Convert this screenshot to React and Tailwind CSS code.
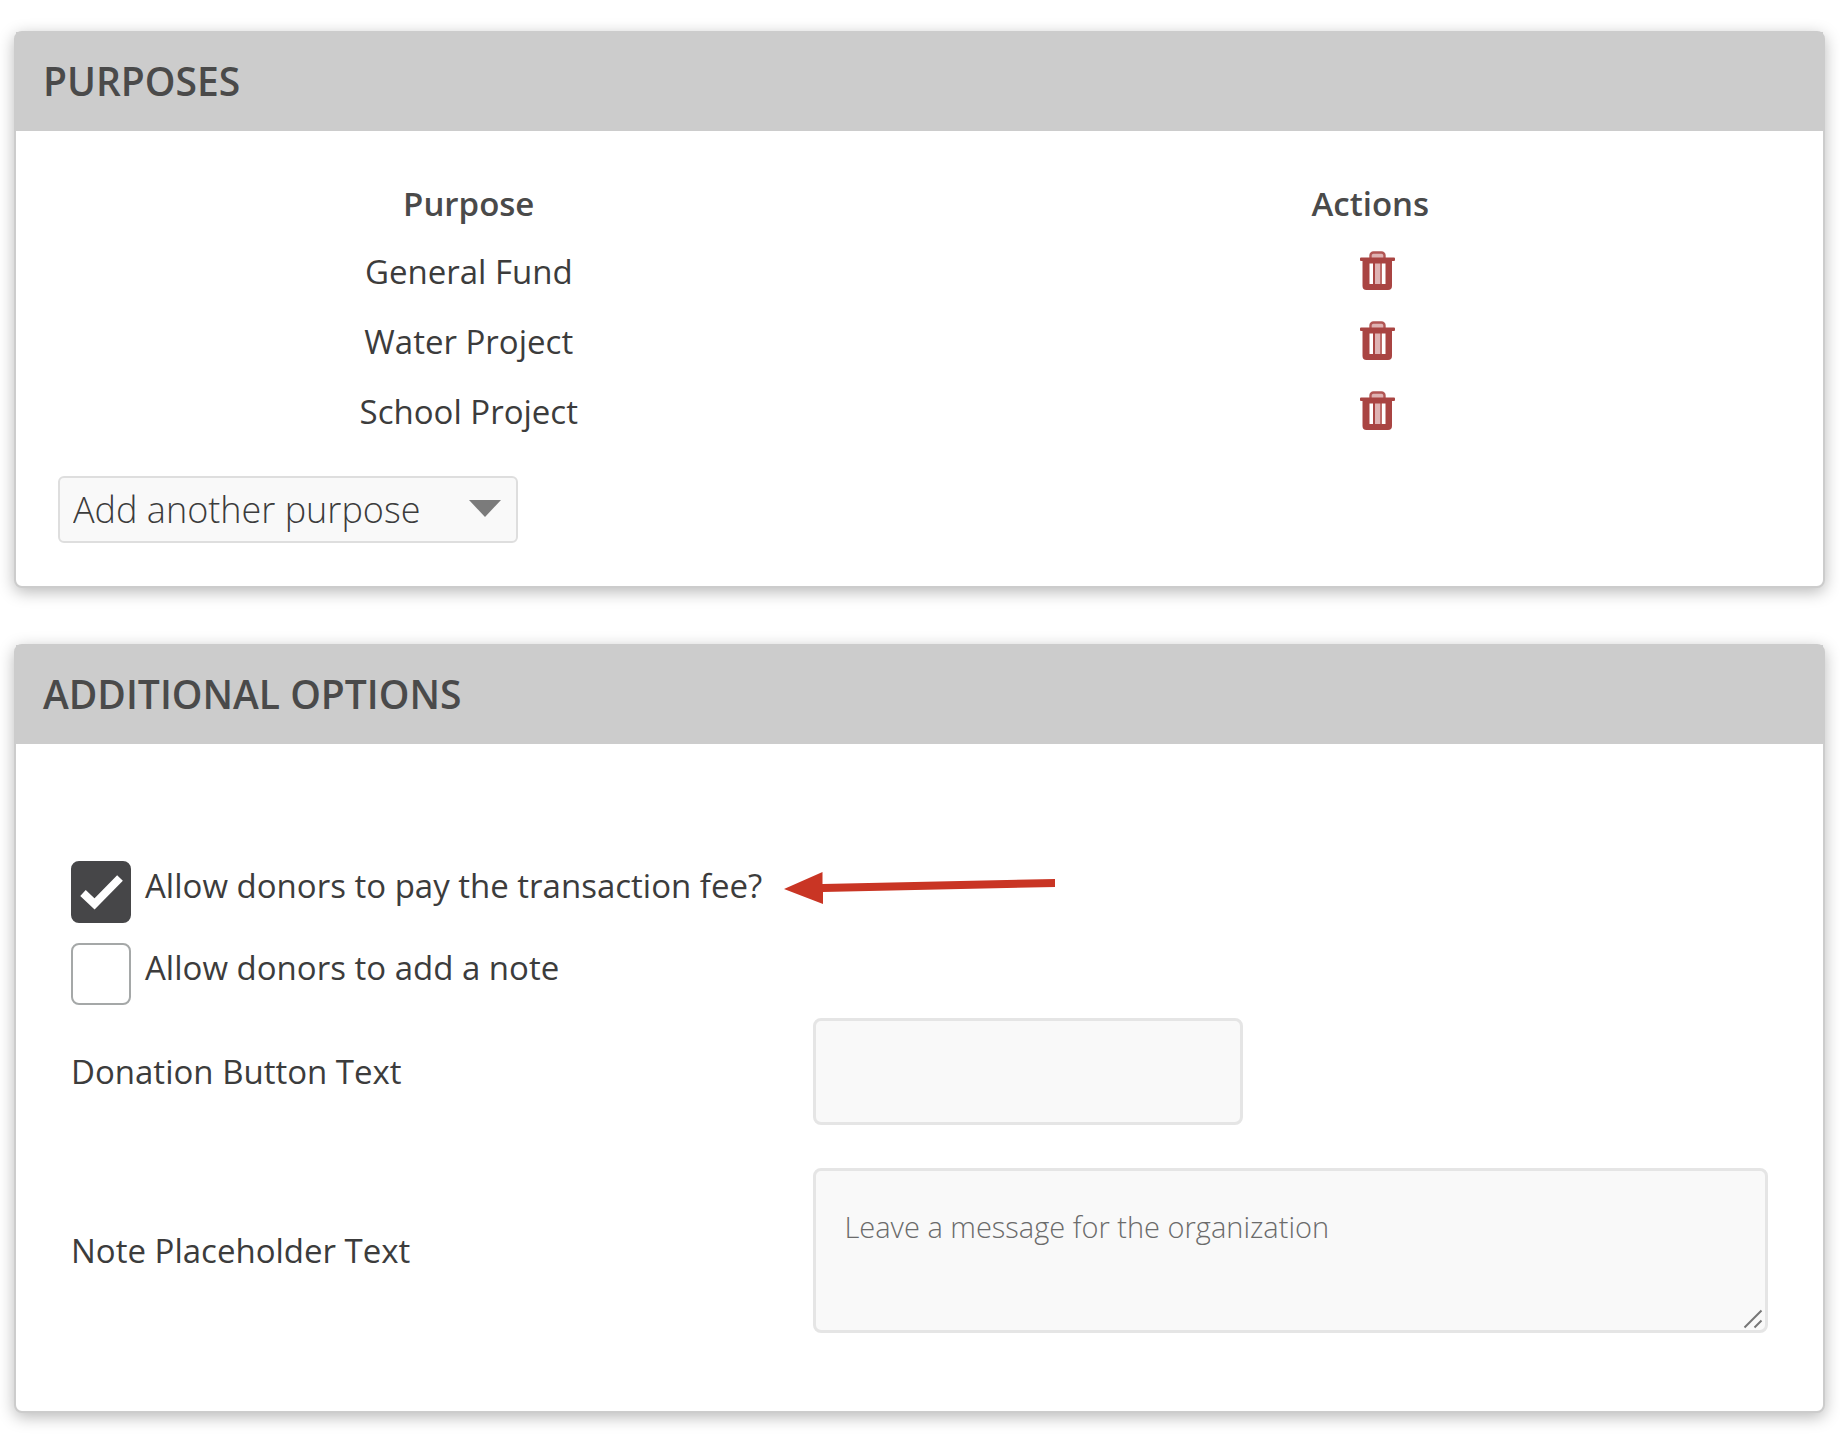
import { useState } from "react";

const purposes = ["General Fund", "Water Project", "School Project"];

function TrashIcon() {
  return (
    <svg viewBox="0 0 35 39" className="h-[39px] w-[35px]" aria-hidden="true">
      <path d="M10.500 8V4.500a3 3 0 0 1 3-3h8a3 3 0 0 1 3 3V8" fill="#dfb3b3" stroke="#b25654" strokeWidth="2.4" />
      <path d="M1 6.500h33a1 1 0 0 1 1 1V9a1 1 0 0 1-1 1h-2v25a4 4 0 0 1-4 4H6.500a4 4 0 0 1-4-4V10H1a1 1 0 0 1-1-1V7.500a1 1 0 0 1 1-1z" fill="#a94442" />
      <path d="M9.500 12.500H13V33H9.500zM22 12.500h3.500V33H22z" fill="#fff" />
      <path d="M15 12.500h5V33h-5z" fill="#dfb3b3" />
      <path d="M20 12.500h2V33h-2z" fill="#bd6b69" />
    </svg>
  );
}

function Card({ title, children }) {
  return (
    <section className="rounded-[8px] border-2 border-[#cccccc] bg-white shadow-[0_4px_16px_rgba(0,0,0,0.28)]">
      <h2 className="-mt-px bg-[#cccccc] px-[27px] pt-[21px] pb-[22px] text-[39px] leading-[56px] font-semibold text-[#4a4a4a] uppercase">{title}</h2>
      {children}
    </section>
  );
}

function CheckOption({ id, label, checked, onChange, children }) {
  return (
    <div className="flex items-start gap-[14px]">
      <span className="relative block h-[62px] w-[60px] shrink-0">
        <input
          id={id}
          type="checkbox"
          checked={checked}
          onChange={(e) => onChange(e.target.checked)}
          className="block h-full w-full appearance-none rounded-[8px] border-2 border-[#a5a8a8] bg-white checked:border-[#464648] checked:bg-[#464648]"
        />
        {checked && (
          <svg viewBox="0 0 60 62" className="pointer-events-none absolute inset-0" aria-hidden="true">
            <path d="M12 32L23.500 43L49 17" fill="none" stroke="#fff" strokeWidth="8" />
          </svg>
        )}
      </span>
      <label htmlFor={id} className="pt-0.5 text-[33px] leading-[46px]">{label}</label>
      {children}
    </div>
  );
}

export default function App() {
  const [fee, setFee] = useState(true);
  const [note, setNote] = useState(false);
  const [text, setText] = useState("");

  return (
    <main className="flex flex-col gap-14 bg-white pt-[31px] pr-[15px] pb-[23px] pl-[14px] font-['Open_Sans',sans-serif] text-[#3c3c3c]">
      <Card title="Purposes">
        <div className="px-0.5 pt-[39px] pb-[43px]">
          <table className="w-full table-fixed text-center text-[33px]">
            <thead>
              <tr className="h-[67px] text-[#4a4a4a]">
                <th className="p-0 font-semibold">Purpose</th>
                <th className="p-0 font-semibold">Actions</th>
              </tr>
            </thead>
            <tbody>
              {purposes.map((name) => (
                <tr key={name} className="h-[70px]">
                  <td className="p-0">{name}</td>
                  <td className="p-0 pb-1 pl-[14px]">
                    <button type="button" aria-label={`Delete ${name}`} className="mx-auto block">
                      <TrashIcon />
                    </button>
                  </td>
                </tr>
              ))}
            </tbody>
          </table>
          <div className="relative mt-[29px] ml-10 w-[460px]">
            <select
              aria-label="Add another purpose"
              className="block h-[67px] w-full appearance-none rounded-[6px] border-2 border-[#dedede] bg-[#f9f9f9] px-[13px] text-[36px] font-light text-[#3c3c3c]"
            >
              <option>Add another purpose</option>
            </select>
            <svg viewBox="0 0 32 17" className="pointer-events-none absolute top-6 right-[17px] h-[17px] w-8" aria-hidden="true">
              <path d="M0 0h32L16 17z" fill="#7b7b7b" />
            </svg>
          </div>
        </div>
      </Card>

      <Card title="Additional Options">
        <div className="pt-[117px] pr-[55px] pb-[78px] pl-[55px]">
          <div className="flex flex-col gap-5">
            <CheckOption id="fee" label="Allow donors to pay the transaction fee?" checked={fee} onChange={setFee}>
              <svg viewBox="0 0 271 34" className="mt-[10px] ml-2 h-[34px] w-[271px]" aria-hidden="true">
                <path d="M0 18L38.500 1V13L271 8V16L39 21V33z" fill="#c93524" />
              </svg>
            </CheckOption>
            <CheckOption id="note" label="Allow donors to add a note" checked={note} onChange={setNote} />
          </div>
          <div className="mt-[13px] grid grid-cols-[7fr_9fr] items-center gap-y-[43px] text-[33px]">
            <label htmlFor="button-text">Donation Button Text</label>
            <input
              id="button-text"
              type="text"
              value={text}
              onChange={(e) => setText(e.target.value)}
              className="block h-[107px] w-[430px] rounded-[8px] border-[3px] border-[#e5e5e5] bg-[#f9f9f9] px-7"
            />
            <label htmlFor="placeholder-text">Note Placeholder Text</label>
            <div className="relative">
              <textarea
                id="placeholder-text"
                placeholder="Leave a message for the organization"
                className="block h-[165px] w-full resize-none rounded-[8px] border-[3px] border-[#e5e5e5] bg-[#f9f9f9] px-7 pt-9 text-[29px] leading-[40px] font-light placeholder:text-[#6b6b6b]"
              />
              <svg viewBox="0 0 20 20" className="pointer-events-none absolute right-[5px] bottom-1 h-5 w-5" aria-hidden="true">
                <path d="M1.500 18.500l17-17M11.500 18.500l7-7" fill="none" stroke="#777" strokeWidth="2" />
              </svg>
            </div>
          </div>
        </div>
      </Card>
    </main>
  );
}
